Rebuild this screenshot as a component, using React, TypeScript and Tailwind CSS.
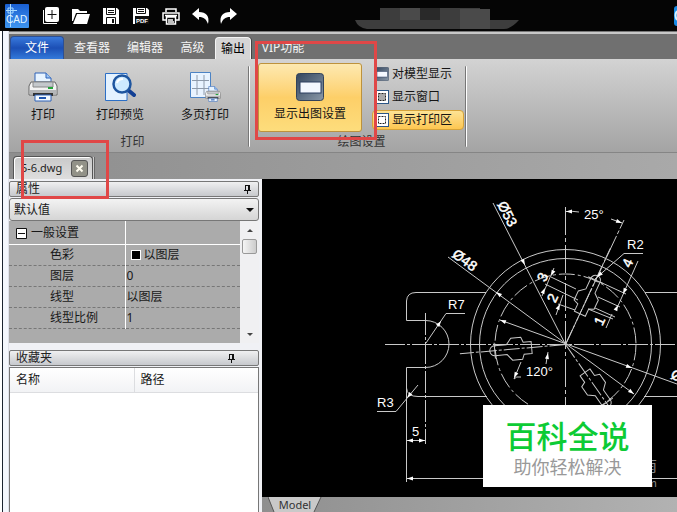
import React from 'react';

const CJK = "font-['Noto_Sans','Noto_Sans_CJK_SC',sans-serif]";

function TitleBar() {
  const tool = 'flex h-[30px] w-[30px] items-center justify-center text-white';
  return (
    <header className="flex h-[31px] shrink-0 items-center bg-[#050505] pt-px pl-[5px]">
      <svg width="24" height="24" viewBox="0 0 24 24" className="mr-[7px] shrink-0" role="img" aria-label="CAD">
        <defs>
          <linearGradient id="cad" x1="0" y1="0" x2="0" y2="1">
            <stop offset="0" stopColor="#1a5fd0" />
            <stop offset="1" stopColor="#3f96f0" />
          </linearGradient>
        </defs>
        <rect width="24" height="24" rx="1" fill="url(#cad)" />
        <path d="M5.500 0V23M1 6.500H12M3 4H8V9H3Z" stroke="#a9dbff" fill="none" />
        <text x="1" y="19" fontSize="10" fill="#e2f5ff" fontFamily="Liberation Sans, sans-serif">CAD</text>
      </svg>
      <button className={tool} aria-label="新建">
        <svg width="18" height="18" viewBox="0 0 18 18">
          <path d="M1.500 3V16.500H15" stroke="#fff" fill="none" />
          <rect x="3" y="0" width="14" height="15" rx="2" fill="#fff" />
          <path d="M10 3V12M5.500 7.500H14.500" stroke="#111" strokeWidth="1" />
        </svg>
      </button>
      <button className={tool} aria-label="打开">
        <svg width="18" height="16" viewBox="0 0 18 16">
          <path d="M0 1H6L8 3H15V5H4L1 13H0Z" fill="#fff" />
          <path d="M5 6H18L15 16H1Z" fill="#fff" />
        </svg>
      </button>
      <button className={tool} aria-label="保存">
        <svg width="16" height="16" viewBox="0 0 16 16">
          <path d="M0 0H14L16 2V16H0Z" fill="#fff" />
          <path d="M3.500 0V6.500H12.500V0M3.500 16V9.500H12.500V16" stroke="#111" fill="none" />
          <path d="M5 2.500H11M5 4.500H11" stroke="#111" />
          <rect x="9" y="11" width="2" height="4" fill="#111" />
        </svg>
      </button>
      <button className={tool} aria-label="输出PDF">
        <svg width="16" height="16" viewBox="0 0 16 16">
          <path d="M0 0H14L16 2V16H0Z" fill="#fff" />
          <path d="M3.500 0V5.500H12.500V0M5 1.500H11M5 3.500H11" stroke="#111" fill="none" />
          <rect x="2" y="8" width="14" height="8" fill="#111" />
          <text x="3" y="15" fontSize="6" fontWeight="700" fill="#fff" fontFamily="Liberation Sans, sans-serif">PDF</text>
        </svg>
      </button>
      <button className={tool} aria-label="打印">
        <svg width="18" height="17" viewBox="0 0 18 17">
          <path d="M4 4V1H14V4M4 12H1V5H17V12H14M4.500 9H13.500V16H4.500ZM3 7.500H15M6 12H11M6 14H12" stroke="#fff" strokeWidth="1.500" fill="none" />
        </svg>
      </button>
      <button className={tool} aria-label="撤销">
        <svg width="18" height="16" viewBox="0 0 18 16">
          <path d="M0 6L7 0V4C14 4 18 8 16 16C14 11 12 9 7 9V12Z" fill="#fff" />
        </svg>
      </button>
      <button className="flex h-[30px] w-[24px] items-center justify-center" aria-label="重做">
        <svg width="18" height="16" viewBox="0 0 18 16">
          <path d="M18 6L11 0V4C4 4 0 8 2 16C4 11 6 9 11 9V12Z" fill="#fff" />
        </svg>
      </button>
      <svg width="164" height="22" viewBox="0 0 164 22" className="mt-[5px] ml-[115px] shrink-0" aria-hidden="true">
        <path d="M0 12H25V0H125V12H164Q156 21 149 21H12Q3 20 0 12Z" fill="#3d3d3d" />
        <path d="M45 0H65V12H45ZM105 1H135V21H105Z" fill="#4a4a4a" />
        <path d="M65 0H85V12H65Z" fill="#292929" />
      </svg>
      <svg width="3" height="20" viewBox="0 0 3 20" className="ml-auto shrink-0" aria-hidden="true">
        <rect width="12" height="20" rx="3" fill="#168be8" />
        <path d="M3 5Q0 9 3 14" stroke="#d8f3ff" strokeWidth="2" fill="none" />
      </svg>
    </header>
  );
}

function RibbonTabs() {
  const plain = 'h-[23px] text-center text-[#f4f4f4]';
  return (
    <nav className="flex h-[28px] shrink-0 items-end border-t border-[#777] bg-[#707070] text-xs shadow-[inset_0_2px_0_#c8c8c8]">
      <button className="ml-px h-[23px] w-[54px] rounded-t-sm border border-b-0 border-[#2c4f94] bg-gradient-to-b from-[#3979dc] via-[#1c4fb5] to-[#3379da] text-white">文件</button>
      <button className={`${plain} w-[56px]`}>查看器</button>
      <button className={`${plain} w-[50px]`}>编辑器</button>
      <button className={`${plain} w-[45px]`}>高级</button>
      <button className="h-[22px] w-[36px] rounded-t-sm border border-b-0 border-[#f4f4f4] bg-[#d5d5d5] text-center text-black shadow-[1px_0_0_#444]">输出</button>
      <button className={`${plain} w-[64px]`}>VIP功能</button>
    </nav>
  );
}

function PrinterArt({ size }: { size: number }) {
  return (
    <svg width={size} height={size} viewBox="0 0 30 30" aria-hidden="true">
      <path d="M7 10V1H18L23 6V10Z" fill="#e8f4ff" stroke="#2e63b8" />
      <path d="M18 1V6H23" fill="#9cc4f2" stroke="#2e63b8" />
      <path d="M3 10H27L29 14V23H1V14Z" fill="#f3f3f3" stroke="#666" />
      <path d="M5 10H25V15H5Z" fill="#c4c8cc" stroke="#888" />
      <path d="M2 18H28V22H2Z" fill="#b4b6b8" />
      <path d="M5 21H25V24H5Z" fill="#333" />
      <rect x="20" y="15" width="5" height="2" fill="#23a43a" />
      <path d="M7 23H23V29H7Z" fill="#f4faff" stroke="#2e63b8" />
      <path d="M11 26H18" stroke="#1e55b0" strokeWidth="2" />
    </svg>
  );
}

function PreviewArt() {
  return (
    <svg width="32" height="30" viewBox="0 0 32 30" aria-hidden="true">
      <path d="M1.500 1.500H23V28.500H1.500Z" fill="#e4f2ff" stroke="#2c6fc6" />
      <path d="M24 18L30 23" stroke="#123f94" strokeWidth="4" strokeLinecap="round" />
      <circle cx="18" cy="12" r="8.500" fill="#cdeaff" stroke="#1e559f" strokeWidth="2.500" />
      <path d="M13 11Q14 7 19 7" stroke="#fff" strokeWidth="2" fill="none" />
    </svg>
  );
}

function MultiPageArt() {
  return (
    <div className="relative h-[30px] w-[32px]">
      <svg width="32" height="30" viewBox="0 0 32 30" aria-hidden="true">
        <path d="M1.500 0.500H21.500V25.500H1.500Z" fill="#e8f3ff" stroke="#4c83c4" />
        <path d="M8 3V23M15 3V23M3 8.500H20M3 16.500H20" stroke="#8e9aaa" />
      </svg>
      <span className="absolute right-0 bottom-0"><PrinterArt size={16} /></span>
    </div>
  );
}

function ScreenArt({ size }: { size: number }) {
  return (
    <svg width={size} height={size} viewBox="0 0 28 28" aria-hidden="true" className="shrink-0">
      <defs>
        <linearGradient id="scr" x1="0" y1="0" x2="1" y2="1">
          <stop offset="0" stopColor="#34465e" />
          <stop offset="1" stopColor="#8a98a8" />
        </linearGradient>
      </defs>
      <rect x="0.500" y="0.500" width="27" height="27" rx="3" fill="url(#scr)" stroke="#33435a" />
      <rect x="4" y="9" width="21" height="11" fill="#f4f8ff" stroke="#2c3f60" />
    </svg>
  );
}

function FrameArt({ filled }: { filled: boolean }) {
  return (
    <svg width="14" height="14" viewBox="0 0 14 14" aria-hidden="true" className="shrink-0">
      <rect x="0.500" y="0.500" width="13" height="13" fill="#fff" stroke="#2b5686" />
      <rect x="3.500" y="3.500" width="7" height="7" fill={filled ? '#aaa' : '#fff'} stroke="#222" strokeDasharray="2 1" />
    </svg>
  );
}

function BigButton({ label, width, children }: { label: string; width: string; children: React.ReactNode }) {
  return (
    <button className={`flex flex-col items-center gap-[4px] ${width}`}>
      <span className="flex h-[30px] items-center">{children}</span>
      <span className="leading-[18px]">{label}</span>
    </button>
  );
}

function Ribbon() {
  const sep = 'mt-[7px] h-[81px] w-[2px] rounded-full border-l border-[#777] bg-white';
  const row = 'flex h-[20px] w-[92px] items-center gap-[3px] rounded-sm border pl-[2px]';
  return (
    <section className="flex h-[94px] shrink-0 border-b border-[#858585] bg-gradient-to-b from-[#d3d3d3] to-[#a4a4a4] text-xs text-[#151515]">
      <div className="flex w-[239px] flex-col items-center justify-between pt-[13px] pb-px">
        <div className="flex w-full">
          <BigButton label="打印" width="w-[68px]"><PrinterArt size={30} /></BigButton>
          <BigButton label="打印预览" width="w-[86px]"><PreviewArt /></BigButton>
          <BigButton label="多页打印" width="w-[84px]"><MultiPageArt /></BigButton>
        </div>
        <span className="pl-[8px] leading-[18px] text-[#333]">打印</span>
      </div>
      <div className={sep} />
      <div className="flex w-[215px] flex-col items-center justify-between pt-[4px] pb-px">
        <div className="flex w-full justify-between pr-px pl-[8px]">
          <button className="flex h-[69px] w-[104px] flex-col items-center gap-[4px] rounded-[3px] border border-[#bd923d] bg-gradient-to-b from-[#fde9b0] via-[#fdcf68] to-[#fddd7c] pt-[9px]">
            <ScreenArt size={28} />
            <span className="leading-[18px]">显示出图设置</span>
          </button>
          <div className="flex flex-col gap-[3px] pt-px">
            <button className={`${row} border-transparent`}><ScreenArt size={14} />对模型显示</button>
            <button className={`${row} border-transparent`}><FrameArt filled />显示窗口</button>
            <button className={`${row} border-[#d6a33a] bg-gradient-to-b from-[#fde394] to-[#fdc64f]`}><FrameArt filled={false} />显示打印区</button>
          </div>
        </div>
        <span className="pl-[8px] leading-[18px] text-[#333]">绘图设置</span>
      </div>
      <div className={sep} />
    </section>
  );
}

function DocumentTabs() {
  return (
    <div className="flex h-[26px] shrink-0 items-end bg-gradient-to-r from-[#8e8e8e] to-[#a9a9a9] pl-[4px]">
      <div className="flex h-[23px] w-[80px] items-center justify-between rounded-t-sm border border-b-0 border-[#555] bg-gradient-to-b from-[#c9c9c9] to-[#dedede] pr-[4px] pl-[7px] text-[11px] text-[#222] shadow-[inset_1px_1px_0_#fff]">
        <span>5-6.dwg</span>
        <button aria-label="关闭" className="flex h-[17px] w-[17px] items-center justify-center rounded-[3px] border border-[#555] bg-[#929288]">
          <svg width="9" height="9" viewBox="0 0 9 9"><path d="M1.500 1.500L7.500 7.500M7.500 1.500L1.500 7.500" stroke="#fffdf0" strokeWidth="2" /></svg>
        </button>
      </div>
      <div className="h-[22px] w-[2px] border-r border-[#666] bg-[#ccc]" />
    </div>
  );
}

function PanelHeader({ title, pad }: { title: string; pad: string }) {
  return (
    <div className={`flex h-[16px] shrink-0 items-center justify-between rounded-[2px] border border-[#777] bg-gradient-to-b from-[#f0f0f1] to-[#c7c9cd] pl-[6px] text-xs leading-[14px] text-[#222] ${pad}`}>
      <h2>{title}</h2>
      <button aria-label="固定">
        <svg width="7" height="9" viewBox="0 0 7 9"><path d="M1.500 0V5.500M1 0.500H6M0 5.500H7M3.500 6V9" stroke="#111" fill="none" /><path d="M5 0V6" stroke="#111" strokeWidth="2" /></svg>
      </button>
    </div>
  );
}

const properties: [string, string][] = [
  ['色彩', '以图层'],
  ['图层', '0'],
  ['线型', '以图层'],
  ['线型比例', '1'],
];

function Sidebar() {
  return (
    <aside className="flex w-[253px] shrink-0 flex-col bg-[#f0f1f5] pt-[2px] pr-[3px] text-xs text-[#181818]">
      <PanelHeader title="属性" pad="pr-[7px]" />
      <div className="relative mt-px">
        <select aria-label="默认值" className="block h-[23px] w-full appearance-none rounded-[3px] border border-[#777] bg-gradient-to-b from-[#f3f3f3] to-[#d5d5d5] pl-[4px] text-xs">
          <option>默认值</option>
        </select>
        <svg width="8" height="5" viewBox="0 0 8 5" className="pointer-events-none absolute top-[10px] right-[5px]"><path d="M0 0H8L4 4Z" fill="#111" /></svg>
      </div>
      <div className="flex h-[122px] shrink-0 bg-[#ababab]">
        <table className="h-[107px] w-[231px] table-fixed border-collapse">
          <tbody>
            <tr className="h-[23px] border-b border-white">
              <th className="w-[116px] border-r border-white p-0 pt-[2px] text-left font-normal">
                <button className="flex items-center gap-[4px] pl-[7px] leading-[18px]">
                  <svg width="11" height="11" viewBox="0 0 11 11"><path d="M0.500 0.500H10.500V10.500H0.500Z" fill="#fff" stroke="#111" /><path d="M2 5.500H9" stroke="#111" /></svg>
                  一般设置
                </button>
              </th>
              <td className="p-0" />
            </tr>
            {properties.map(([name, value], i) => (
              <tr key={name} className="h-[21px] border-b border-dashed border-[#777]">
                <th className="border-r border-white p-0 pl-[41px] text-left leading-[18px] font-normal">{name}</th>
                <td className="p-0 pl-px leading-[18px]">
                  <span className="flex items-center gap-[3px]">
                    {i === 0 && <i className="ml-[4px] h-[10px] w-[10px] border border-white bg-black" />}
                    {value}
                  </span>
                </td>
              </tr>
            ))}
          </tbody>
        </table>
        <div className="flex flex-1 flex-col items-center bg-[#f0f0f2]">
          <svg width="6" height="18" viewBox="0 0 6 18"><path d="M0 11L3 8L6 11Z" fill="#444" /></svg>
          <div className="h-[15px] w-[15px] rounded-[2px] border border-[#999] bg-gradient-to-r from-[#f5f5f5] to-[#ccc]" />
          <svg width="6" height="18" viewBox="0 0 6 18" className="mt-auto"><path d="M0 8L3 11L6 8Z" fill="#444" /></svg>
        </div>
      </div>
      <div className="h-[7px] shrink-0" />
      <PanelHeader title="收藏夹" pad="pr-[23px]" />
      <div className="mt-px flex-1 border border-b-0 border-[#777] bg-white">
        <table className="w-full table-fixed">
          <thead>
            <tr className="h-[24px] bg-gradient-to-b from-white to-[#f2f3f5]">
              <th className="w-[124px] border-r border-b border-[#dcdde0] p-0 pl-[6px] text-left leading-[18px] font-normal">名称</th>
              <th className="border-b border-[#dcdde0] p-0 pl-[6px] text-left leading-[18px] font-normal">路径</th>
            </tr>
          </thead>
        </table>
      </div>
    </aside>
  );
}

/* Arrow head whose tip is at (x, y) and which points along angle a, in degrees. */
function Arrow({ x, y, a }: { x: number; y: number; a: number }) {
  return <path d="M0 0L-6 -2V2Z" fill="#fff" stroke="none" transform={`translate(${x} ${y}) rotate(${a})`} />;
}

function Drawing() {
  const keyway = 'M-6 -34V-42L-11 -44V-54L-5 -59V-71A5 5 0 0 1 5 -71V-59L11 -54V-44L6 -42V-34Z';
  return (
    <svg width="415" height="318" viewBox="262 179 415 318" className="block shrink-0" role="img" aria-label="CAD 图纸">
      <g stroke="#c9c9c9" strokeWidth="1" fill="none">
        <circle cx="565.500" cy="344.500" r="95" />
        <circle cx="565.500" cy="344.500" r="86" />
        <circle cx="565.500" cy="344.500" r="70.500" strokeDasharray="16 3 3 3" />
        <path d="M385 344.500H677" strokeDasharray="20 2 3 2" />
        <path d="M565.500 207V470" strokeDasharray="28 3 4 3" />
        <path d="M425.500 313V444" strokeDasharray="22 2 3 2" />
        <path d="M425.500 320.500H406.500V301Q407 292.500 416 292.500H486M425.500 320.500A23.500 23.500 0 0 1 425.500 367.500H406.500V388Q407 396.500 418 396.500H487" />
        <path d="M406.500 388V482M406.500 440.500H425M406.500 478.500H677" />
        <path d="M645 292.500H677M644 396.500H677" />
        <path d="M377 411.500H396L418 385M465 313.500H446L426 343" />
        <path d="M493 203L565.500 344.500M448 257L634 394M500 320L677 384" />
        <path d="M565.500 344.500L624 220" strokeDasharray="24 2 4 2" />
        <path d="M566 211.500Q573 211 579 212M611 219L622 223" />
        <path d="M643 253.500H624L595 279" />
        <path d="M554 268L542 296M551 277L576 289M545 284L578 300M563 295L556 315M558 304L575 310" />
        <path d="M638 261L617 308M600 282L626 294M598 297L620 307M588 309L613 319M595 308L615 317M612 314L606 328" />
        <path d="M521 362L514 379M548 352L546 364M514 379Q516 376 521 377" />
        {[25, 145, 265].map((a) => (
          <g key={a} transform={`translate(565.500 344.500) rotate(${a})`}>
            <path d={keyway} />
            <path d="M0 0V-106" strokeDasharray="16 2 3 2" />
            <path d="M-8 -71H8" />
          </g>
        ))}
      </g>
      <Arrow x={407} y={440.5} a={180} />
      <Arrow x={425} y={440.5} a={0} />
      <Arrow x={407} y={478.5} a={180} />
      <Arrow x={407} y={398} a={130} />
      <Arrow x={441} y={321} a={-56} />
      <Arrow x={525} y={265} a={63} />
      <Arrow x={496} y={292} a={216} />
      <Arrow x={500} y={320} a={200} />
      <Arrow x={634} y={394} a={36} />
      <Arrow x={632} y={368} a={20} />
      <Arrow x={566} y={211.5} a={180} />
      <Arrow x={622} y={223} a={20} />
      <Arrow x={597} y={277} a={139} />
      <Arrow x={551} y={276} a={115} />
      <Arrow x={545} y={288} a={-65} />
      <Arrow x={560} y={304} a={-65} />
      <Arrow x={623} y={294} a={115} />
      <Arrow x={618} y={305} a={-65} />
      <Arrow x={548} y={353} a={-80} />
      <Arrow x={514} y={378} a={115} />
      <g fill="#fff" fontSize="13" fontFamily="Liberation Sans, Arial, sans-serif">
        <text x="377" y="407">R3</text>
        <text x="448" y="309">R7</text>
        <text x="627" y="249">R2</text>
        <text x="412" y="436">5</text>
        <text x="584" y="219">25°</text>
        <text x="526" y="376">120°</text>
        <g fontSize="14" stroke="#fff" strokeWidth="0.500" textAnchor="middle">
          <text transform="translate(503 216) rotate(63)">Ø53</text>
          <text transform="translate(462 264) rotate(36)">Ø48</text>
          <text transform="translate(675 380) rotate(20)">Ø</text>
          <text transform="translate(547 279) rotate(-65)">3</text>
          <text transform="translate(557 300) rotate(-65)">2</text>
          <text transform="translate(604 323) rotate(-65)">1</text>
          <text transform="translate(632 265) rotate(-65)">4</text>
        </g>
      </g>
      <g fill="#888" textAnchor="end" fontFamily="Noto Sans CJK SC, sans-serif">
        <text x="657" y="471" fontSize="15">南</text>
        <text x="657" y="487" fontSize="11">m</text>
      </g>
    </svg>
  );
}

function Canvas() {
  return (
    <main className="flex min-w-0 flex-1 flex-col">
      <div className="relative flex-1 overflow-hidden bg-black">
        <Drawing />
        <div className="absolute top-[226px] left-[221px] flex h-[82px] w-[169px] flex-col items-center bg-white pt-[14px] font-['Liberation_Sans','Noto_Sans_CJK_SC',sans-serif]">
          <strong className="text-[31px] leading-[38px] font-medium text-[#0dcb35]">百科全说</strong>
          <span className="text-[18px] leading-[22px] text-[#999]">助你轻松解决</span>
        </div>
      </div>
      <div className="flex h-[15px] shrink-0 overflow-hidden bg-gradient-to-r from-[#8f8f8f] to-[#b2b2b2] pl-[6px]">
        <button className="relative h-[15px] w-[54px] text-[11px] leading-[15px] text-[#333]">
          <svg width="54" height="15" viewBox="0 0 54 15" className="absolute inset-0" aria-hidden="true">
            <path d="M0 0H53L46 15H6Z" fill="#c9c9c9" />
            <path d="M0 0L6 15M53 0L46 15" stroke="#555" />
          </svg>
          <span className="relative">Model</span>
        </button>
      </div>
    </main>
  );
}

export default function App() {
  return (
    <div className={`relative flex h-screen flex-col overflow-hidden bg-[#f5f7fc] ${CJK}`}>
      <TitleBar />
      <div className="flex min-h-0 flex-1">
        <div className="w-[9px] shrink-0 border-r border-[#e0e2ea] bg-[#f4f7fd] shadow-[inset_2px_0_0_#fff,inset_3px_0_0_#1b2430]" />
        <div className="flex min-w-0 flex-1 flex-col">
          <RibbonTabs />
          <Ribbon />
          <DocumentTabs />
          <div className="flex min-h-0 flex-1">
            <Sidebar />
            <Canvas />
          </div>
        </div>
      </div>
      <div className="pointer-events-none absolute top-[41px] left-[255px] h-[99px] w-[122px] border-[3px] border-[#e04747]" />
      <div className="pointer-events-none absolute top-[140px] left-[21px] h-[59px] w-[88px] border-[3px] border-[#e04747]" />
    </div>
  );
}
